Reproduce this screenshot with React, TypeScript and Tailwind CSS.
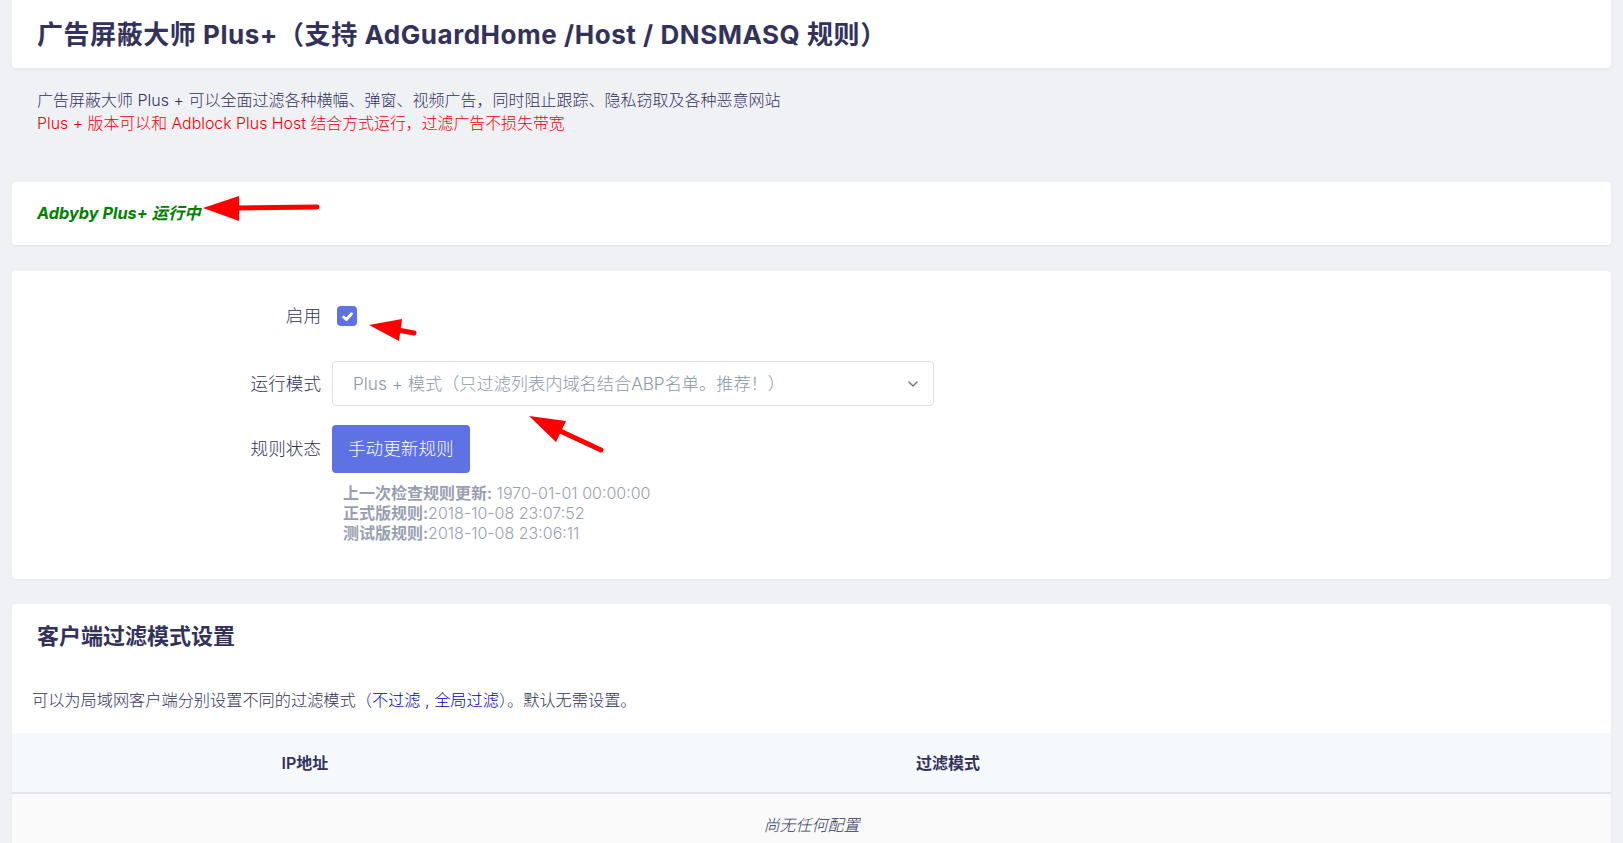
import { ChevronDown } from "lucide-react";

const font = "font-['Inter','Noto_Sans_CJK_SC',sans-serif]";

const ruleInfo = [
  { label: "上一次检查规则更新:", value: " 1970-01-01 00:00:00" },
  { label: "正式版规则:", value: "2018-10-08 23:07:52" },
  { label: "测试版规则:", value: "2018-10-08 23:06:11" },
];

function Arrows() {
  return (
    <svg className="pointer-events-none absolute left-0 top-0" width="1623" height="843" fill="#ff0000">
      {/* status arrow */}
      <line x1="236" y1="208" x2="317" y2="207" stroke="#ff0000" strokeWidth="5" strokeLinecap="round" />
      <polygon points="203,208 239,196 239,221" />
      {/* checkbox arrow */}
      <line x1="398" y1="330" x2="414" y2="333" stroke="#ff0000" strokeWidth="5" strokeLinecap="round" />
      <polygon points="369,325 402,319 399,341" />
      {/* select arrow */}
      <line x1="558" y1="430" x2="601" y2="450" stroke="#ff0000" strokeWidth="5" strokeLinecap="round" />
      <polygon points="529,416 566,421 556,442" />
    </svg>
  );
}

export default function App() {
  return (
    <div className={`relative min-h-screen bg-[#f0f1f4] px-3 pb-6 text-[#32325d] ${font}`}>
      {/* Header */}
      <div className="flex h-[68px] items-center rounded-b bg-white px-[25px] shadow-[0_1px_3px_rgba(0,0,0,0.05)]">
        <h1 className="text-[26px] font-bold tracking-[0.55px] text-[#32325d]">
          广告屏蔽大师 Plus+（支持 AdGuardHome /Host / DNSMASQ 规则）
        </h1>
      </div>

      <div className="px-[25px] pt-5 pb-[46px] text-[16px] font-light leading-6">
        <p className="text-[#32325d]">广告屏蔽大师 Plus + 可以全面过滤各种横幅、弹窗、视频广告，同时阻止跟踪、隐私窃取及各种恶意网站</p>
        <p className="text-[15.9px] text-[#f40000]">Plus + 版本可以和 Adblock Plus Host 结合方式运行，过滤广告不损失带宽</p>
      </div>

      {/* Status */}
      <div className="flex h-[63px] items-center rounded bg-white px-[25px] shadow-[0_1px_3px_rgba(0,0,0,0.05)]">
        <span className="text-[16.3px] font-bold italic text-[#008000]">Adbyby Plus+ 运行中</span>
      </div>

      {/* Settings */}
      <div className="mt-[26px] rounded bg-white pt-[25px] pb-9 shadow-[0_1px_3px_rgba(0,0,0,0.05)]">
        <div className="grid grid-cols-[309px_1fr] items-center gap-x-[11px]">
          <label className="h-10 text-right text-[17.6px] font-light leading-10">启用</label>
          <div className="flex h-10 items-center pl-[5px]">
            <span className="flex h-5 w-5 items-center justify-center rounded bg-[#5e72e4]">
              <svg width="13" height="13" viewBox="0 0 12 12" fill="none" stroke="white" strokeWidth="2.6" strokeLinecap="round" strokeLinejoin="round">
                <path d="M2.4 6.4 5 8.8 9.7 3.5" />
              </svg>
            </span>
          </div>

          <label className="mt-[25px] text-right text-[17.6px] font-light leading-[45px]">运行模式</label>
          <div className="mt-[25px] flex h-[45px] w-[602px] items-center justify-between rounded border border-[#dee2e6] pl-5 pr-3 text-[17.2px] font-light text-[#8898aa]">
            <span>Plus + 模式（只过滤列表内域名结合ABP名单。推荐！）</span>
            <ChevronDown size={16} strokeWidth={2} className="text-[#6b7280]" />
          </div>

          <label className="mt-[19px] text-right text-[17.6px] font-light leading-[48px]">规则状态</label>
          <div className="mt-[19px]">
            <button className="h-12 rounded bg-[#5e72e4] px-4 text-[17.6px] font-light text-white">手动更新规则</button>
          </div>

          <div />
          <div className="mt-[10px] pl-[11px] text-[16px] leading-5 text-[#999fb0]">
            {ruleInfo.map((r) => (
              <div key={r.label}>
                <span className="font-semibold">{r.label}</span>
                <span className="font-light">{r.value}</span>
              </div>
            ))}
          </div>
        </div>
      </div>

      {/* Client filter */}
      <div className="mt-[25px] overflow-hidden rounded-t bg-white shadow-[0_1px_3px_rgba(0,0,0,0.05)]">
        <h2 className="px-[25px] pt-[18px] text-[22px] font-bold leading-7">客户端过滤模式设置</h2>
        <p className="mt-[38px] px-5 text-[16.2px] font-light leading-6">
          可以为局域网客户端分别设置不同的过滤模式（<span className="text-[#0000cc]">不过滤 , 全局过滤</span>）。默认无需设置。
        </p>
        <table className="mt-[21px] w-full text-[16px]">
          <thead>
            <tr className="h-[60px] border-b-2 border-[#e3e6ea] bg-[#f6f9fc]">
              <th className="w-[586px] font-semibold">IP地址</th>
              <th className="w-[700px] font-semibold">过滤模式</th>
              <th />
            </tr>
          </thead>
          <tbody>
            <tr className="h-[62px] bg-[#fafafa]">
              <td colSpan={3} className="text-center font-light italic">尚无任何配置</td>
            </tr>
          </tbody>
        </table>
      </div>

      <Arrows />
    </div>
  );
}
